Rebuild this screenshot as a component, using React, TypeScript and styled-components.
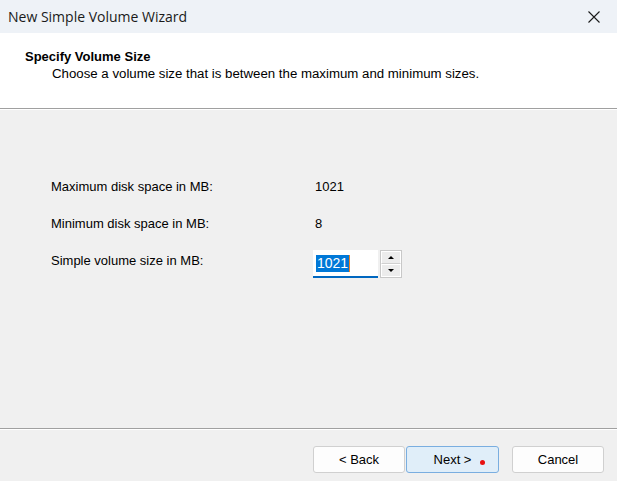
import React from "react";
import styled, { createGlobalStyle } from "styled-components";

const GlobalStyle = createGlobalStyle`
  html, body { margin: 0; padding: 0; background: #f0f0f0; }
  * { box-sizing: border-box; }
`;

const Window = styled.div`
  width: 617px;
  height: 481px;
  display: flex;
  flex-direction: column;
  background: #f0f0f0;
  overflow: hidden;
  font-family: "Liberation Sans", Arial, sans-serif;
  font-size: 12px;
  color: #000;
`;

const TitleBar = styled.div`
  height: 33px;
  display: flex;
  align-items: center;
  justify-content: space-between;
  background: #eef2f7;
  padding-left: 8px;
`;

const Title = styled.span`
  font-family: "Open Sans", "Noto Sans", sans-serif;
  font-size: 14px;
  color: #1a1a1a;
`;

const CloseButton = styled.div`
  width: 46px;
  height: 33px;
  display: flex;
  align-items: center;
  justify-content: center;
`;

const Header = styled.div`
  height: 75px;
  background: #fff;
  padding: 16px 0 0 25px;
  display: flex;
  flex-direction: column;
`;

const HeaderTitle = styled.div`
  font-weight: bold;
  font-size: 13px;
  line-height: 16px;
`;

const HeaderSub = styled.div`
  font-size: 13.25px;
  line-height: 16px;
  padding-left: 27px;
  margin-top: 1px;
`;

const Separator = styled.div`
  height: 2px;
  border-top: 1px solid #a0a0a0;
  border-bottom: 1px solid #fff;
`;

const Body = styled.div`
  flex: 1;
  padding: 58px 0 0 51px;
`;

const Grid = styled.div`
  display: grid;
  grid-template-columns: 262px auto;
  grid-auto-rows: 37px;
  align-items: center;
  justify-items: start;
`;

const Label = styled.span`
  font-size: 13px;
`;

const Value = styled.span`
  font-size: 13px;
  padding-left: 2px;
`;

const Spin = styled.div`
  display: flex;
  align-items: stretch;
  height: 28px;
  margin-top: 7px;
`;

const SpinInput = styled.div`
  width: 65px;
  background: #fff;
  border-bottom: 2px solid #0067c0;
  display: flex;
  align-items: center;
  padding-left: 3px;
`;

const Selected = styled.span`
  background: #0078d7;
  color: #fff;
  font-size: 14px;
  line-height: 17px;
  padding: 0 1px;
  border-right: 1px solid #f08020;
`;

const SpinButtons = styled.div`
  width: 22px;
  display: flex;
  flex-direction: column;
  border: 1px solid #c8c8c8;
  background: #fff;
  margin-left: 2px;
`;

const SpinButton = styled.div<{ $up?: boolean }>`
  flex: 1;
  display: flex;
  align-items: center;
  justify-content: center;
  background: #ececec;
  border: 1px solid #fff;
  ${(p) => (p.$up ? "border-bottom: 1px solid #d0d0d0;" : "")}
`;

const Arrow = styled.span<{ $up?: boolean }>`
  width: 0;
  height: 0;
  border-left: 3px solid transparent;
  border-right: 3px solid transparent;
  ${(p) =>
    p.$up ? "border-bottom: 3px solid #000;" : "border-top: 3px solid #000;"}
`;

const Footer = styled.div`
  height: 51px;
  display: flex;
  align-items: flex-start;
  padding: 16px 0 0 313px;
`;

const Button = styled.div<{ $focused?: boolean; $gap?: number }>`
  width: ${(p) => (p.$focused ? 93 : 92)}px;
  height: 27px;
  border-radius: 3px;
  display: flex;
  align-items: center;
  justify-content: center;
  font-size: 13px;
  margin-right: ${(p) => p.$gap ?? 0}px;
  background: ${(p) => (p.$focused ? "#e0eef9" : "#fdfdfd")};
  border: 1px solid ${(p) => (p.$focused ? "#7aaee0" : "#d0d0d0")};
  position: relative;
`;

const Dot = styled.span`
  position: absolute;
  left: 73px;
  top: 13px;
  width: 5px;
  height: 5px;
  border-radius: 50%;
  background: #e81010;
`;

export default function App() {
  return (
    <>
      <GlobalStyle />
      <Window>
        <TitleBar>
          <Title>New Simple Volume Wizard</Title>
          <CloseButton>
            <svg width="12" height="12" viewBox="0 0 12 12">
              <path d="M0.5 0.5 L11.5 11.5 M11.5 0.5 L0.5 11.5" stroke="#1a1a1a" strokeWidth="1.1" fill="none" />
            </svg>
          </CloseButton>
        </TitleBar>
        <Header>
          <HeaderTitle>Specify Volume Size</HeaderTitle>
          <HeaderSub>Choose a volume size that is between the maximum and minimum sizes.</HeaderSub>
        </Header>
        <Separator />
        <Body>
          <Grid>
            <Label>Maximum disk space in MB:</Label>
            <Value>1021</Value>
            <Label>Minimum disk space in MB:</Label>
            <Value>8</Value>
            <Label>Simple volume size in MB:</Label>
            <Spin>
              <SpinInput>
                <Selected>1021</Selected>
              </SpinInput>
              <SpinButtons>
                <SpinButton $up>
                  <Arrow $up />
                </SpinButton>
                <SpinButton>
                  <Arrow />
                </SpinButton>
              </SpinButtons>
            </Spin>
          </Grid>
        </Body>
        <Separator />
        <Footer>
          <Button $gap={1}>&lt; Back</Button>
          <Button $focused $gap={13}>
            Next &gt;
            <Dot />
          </Button>
          <Button>Cancel</Button>
        </Footer>
      </Window>
    </>
  );
}
